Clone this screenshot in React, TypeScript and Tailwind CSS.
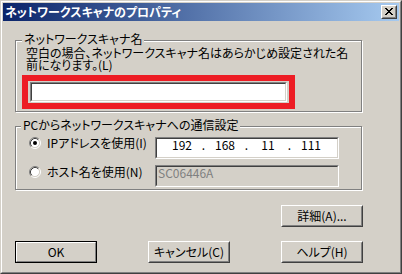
import React from "react";

function Sunken({
  className = "",
  children,
}: {
  className?: string;
  children?: React.ReactNode;
}) {
  return (
    <div
      className={`border border-t-[#808080] border-l-[#808080] border-r-white border-b-white ${className}`}
    >
      <div className="h-full w-full border border-t-[#404040] border-l-[#404040] border-r-[#d4d0c8] border-b-[#d4d0c8]">
        {children}
      </div>
    </div>
  );
}

function Btn({ children, def = false }: { children: React.ReactNode; def?: boolean }) {
  if (def) {
    return (
      <button className="w-[82px] h-[22px] border border-black bg-[#d4d0c8] p-0">
        <div className="h-full w-full border border-t-white border-l-white border-r-[#808080] border-b-[#808080] flex items-center justify-center leading-[12px]">
          {children}
        </div>
      </button>
    );
  }
  return (
    <button className="w-[82px] h-[22px] border border-t-white border-l-white border-r-[#404040] border-b-[#404040] bg-[#d4d0c8] p-0">
      <div className="h-full w-full border border-t-[#d4d0c8] border-l-[#d4d0c8] border-r-[#808080] border-b-[#808080] flex items-center justify-center leading-[12px]">
        {children}
      </div>
    </button>
  );
}

function Radio({ checked }: { checked?: boolean }) {
  return (
    <svg width="12" height="12" viewBox="0 0 12 12" className="shrink-0">
      <circle cx="6" cy="6" r="4.5" fill="#fff" />
      <path d="M2.11 9.89 A5.5 5.5 0 0 1 9.89 2.11" fill="none" stroke="#808080" strokeWidth="1" />
      <path d="M9.89 2.11 A5.5 5.5 0 0 1 2.11 9.89" fill="none" stroke="#ffffff" strokeWidth="1" />
      <path d="M2.82 9.18 A4.5 4.5 0 0 1 9.18 2.82" fill="none" stroke="#404040" strokeWidth="1" />
      <path d="M9.18 2.82 A4.5 4.5 0 0 1 2.82 9.18" fill="none" stroke="#d4d0c8" strokeWidth="1" />
      {checked && <circle cx="6" cy="6" r="2" fill="#000" />}
    </svg>
  );
}

function CloseBtn() {
  const px: [number, number][] = [
    [0, 0], [1, 0], [6, 0], [7, 0],
    [1, 1], [2, 1], [5, 1], [6, 1],
    [2, 2], [3, 2], [4, 2], [5, 2],
    [3, 3], [4, 3],
    [2, 4], [3, 4], [4, 4], [5, 4],
    [1, 5], [2, 5], [5, 5], [6, 5],
    [0, 6], [1, 6], [6, 6], [7, 6],
  ];
  return (
    <div className="w-[16px] h-[14px] border border-t-white border-l-white border-r-[#404040] border-b-[#404040] bg-[#d4d0c8]">
      <div className="h-full w-full border border-t-[#d4d0c8] border-l-[#d4d0c8] border-r-[#808080] border-b-[#808080] flex items-start pl-[2px] pt-px">
        <svg width="8" height="7" viewBox="0 0 8 7" shapeRendering="crispEdges">
          {px.map(([x, y], i) => (
            <rect key={i} x={x} y={y} width="1" height="1" fill="#000" />
          ))}
        </svg>
      </div>
    </div>
  );
}

export default function App() {
  const ip = ["192", "168", "11", "111"];
  return (
    <div className="w-[402px] h-[274px] bg-[#d4d0c8] border border-t-[#d4d0c8] border-l-[#d4d0c8] border-r-[#404040] border-b-[#404040] font-['Noto_Sans_CJK_JP',sans-serif] text-[12px] text-black [font-feature-settings:'palt']">
      <div className="h-full border border-t-white border-l-white border-r-[#808080] border-b-[#808080] p-px flex flex-col">
        <div className="h-[18px] flex items-center justify-between bg-[linear-gradient(to_right,#0a246a,#a6caf0)] pl-[2px] pr-[2px]">
          <span className="text-white font-bold leading-[12px]">ネットワークスキャナのプロパティ</span>
          <CloseBtn />
        </div>

        <div className="pl-[12px] pt-[19px] flex flex-col">
          <div className="relative w-[347px] h-[72px] border border-[#808080] shadow-[inset_1px_1px_0_#fff,1px_1px_0_#fff] pt-[6px] pl-[10px]">
            <span className="absolute left-[6px] top-[-8px] bg-[#d4d0c8] px-[2px] leading-[12px] whitespace-nowrap">
              ネットワークスキャナ名
            </span>
            <p className="leading-[12px] whitespace-nowrap">
              空白の場合、ネットワークスキャナ名はあらかじめ設定された名
              <br />
              前になります。(L)
            </p>
            <div className="ml-[-4px] mt-[4px] w-[273px] h-[34px] border-[6px] border-[#ed1c24] px-[2px] py-px">
              <Sunken className="w-full h-full bg-white" />
            </div>
          </div>

          <div className="relative mt-[14px] w-[347px] h-[64px] border border-[#808080] shadow-[inset_1px_1px_0_#fff,1px_1px_0_#fff] pt-[10px] pl-[13px]">
            <span className="absolute left-[5px] top-[-8px] bg-[#d4d0c8] px-[2px] leading-[12px] whitespace-nowrap">
              PCからネットワークスキャナへの通信設定
            </span>
            <div className="flex">
              <div className="w-[126px] h-[12px] flex items-center gap-[6px]">
                <Radio checked />
                <span className="leading-[12px] whitespace-nowrap">IPアドレスを使用(I)</span>
              </div>
              <Sunken className="w-[184px] h-[22px] bg-white">
                <div className="flex pl-[7px] leading-[12px]">
                  {ip.map((v, i) => (
                    <React.Fragment key={i}>
                      <span className="w-[36px] text-center">{v}</span>
                      {i < 3 && <span className="w-[7px] text-center">.</span>}
                    </React.Fragment>
                  ))}
                </div>
              </Sunken>
            </div>
            <div className="flex mt-[6px]">
              <div className="w-[126px] h-[12px] mt-px flex items-center gap-[6px]">
                <Radio />
                <span className="leading-[12px] whitespace-nowrap">ホスト名を使用(N)</span>
              </div>
              <Sunken className="w-[184px] h-[22px] bg-[#d4d0c8]">
                <div className="pl-[1px] leading-[12px] text-[#808080]">SC06446A</div>
              </Sunken>
            </div>
          </div>

          <div className="mt-[15px] w-[348px] flex justify-end">
            <Btn>詳細(A)...</Btn>
          </div>
          <div className="mt-[14px] w-[348px] flex justify-between">
            <Btn def>OK</Btn>
            <Btn>キャンセル(C)</Btn>
            <Btn>ヘルプ(H)</Btn>
          </div>
        </div>
      </div>
    </div>
  );
}
